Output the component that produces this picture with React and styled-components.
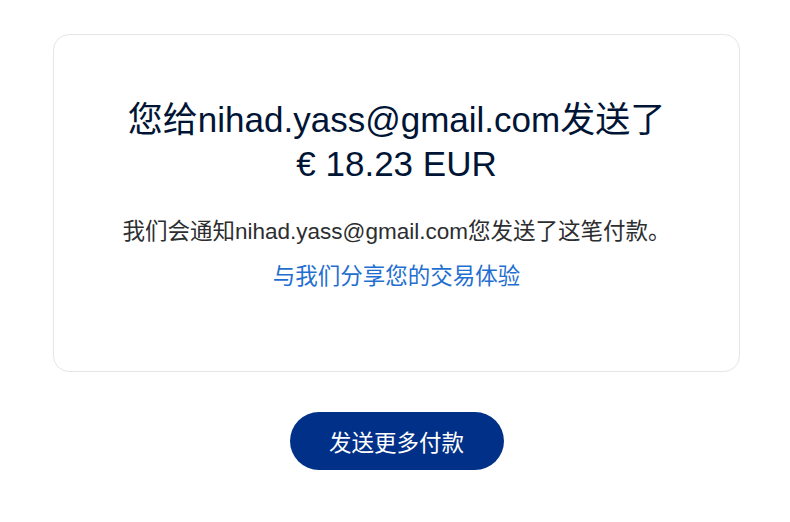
import React from 'react'
import styled, { createGlobalStyle } from 'styled-components'

const GlobalStyle = createGlobalStyle`
  body {
    margin: 0;
    background: #ffffff;
    font-family: "Liberation Sans", "Noto Sans CJK SC", Arial, sans-serif;
  }
`

const Page = styled.div`
  width: 790px;
  box-sizing: border-box;
  display: flex;
  flex-direction: column;
  align-items: center;
  padding: 34px 0 0 3px;
`

const Card = styled.div`
  width: 687px;
  box-sizing: border-box;
  border: 1px solid #e6e6e6;
  border-radius: 16px;
  padding: 63px 20px 79px;
  display: flex;
  flex-direction: column;
  align-items: center;
  text-align: center;
`

const Heading = styled.h1`
  margin: 0;
  font-size: 35px;
  line-height: 44px;
  font-weight: 400;
  color: #001435;
`

const Notice = styled.p`
  margin: 31px 0 0;
  font-size: 22.5px;
  line-height: 30px;
  color: #2c2e2f;
`

const ShareLink = styled.a`
  margin-top: 15px;
  font-size: 22.5px;
  line-height: 30px;
  color: #1f6fd0;
  text-decoration: none;
  cursor: pointer;
`

const SendButton = styled.button`
  margin-top: 40px;
  width: 214px;
  height: 58px;
  border: none;
  border-radius: 29px;
  background: #003087;
  color: #ffffff;
  font-family: inherit;
  font-size: 22.5px;
  cursor: pointer;
`

const App = () => (
  <>
    <GlobalStyle />
    <Page>
      <Card>
        <Heading>
          您给nihad.yass@gmail.com发送了
          <br />
          € 18.23 EUR
        </Heading>
        <Notice>我们会通知nihad.yass@gmail.com您发送了这笔付款。</Notice>
        <ShareLink>与我们分享您的交易体验</ShareLink>
      </Card>
      <SendButton>发送更多付款</SendButton>
    </Page>
  </>
)

export default App
